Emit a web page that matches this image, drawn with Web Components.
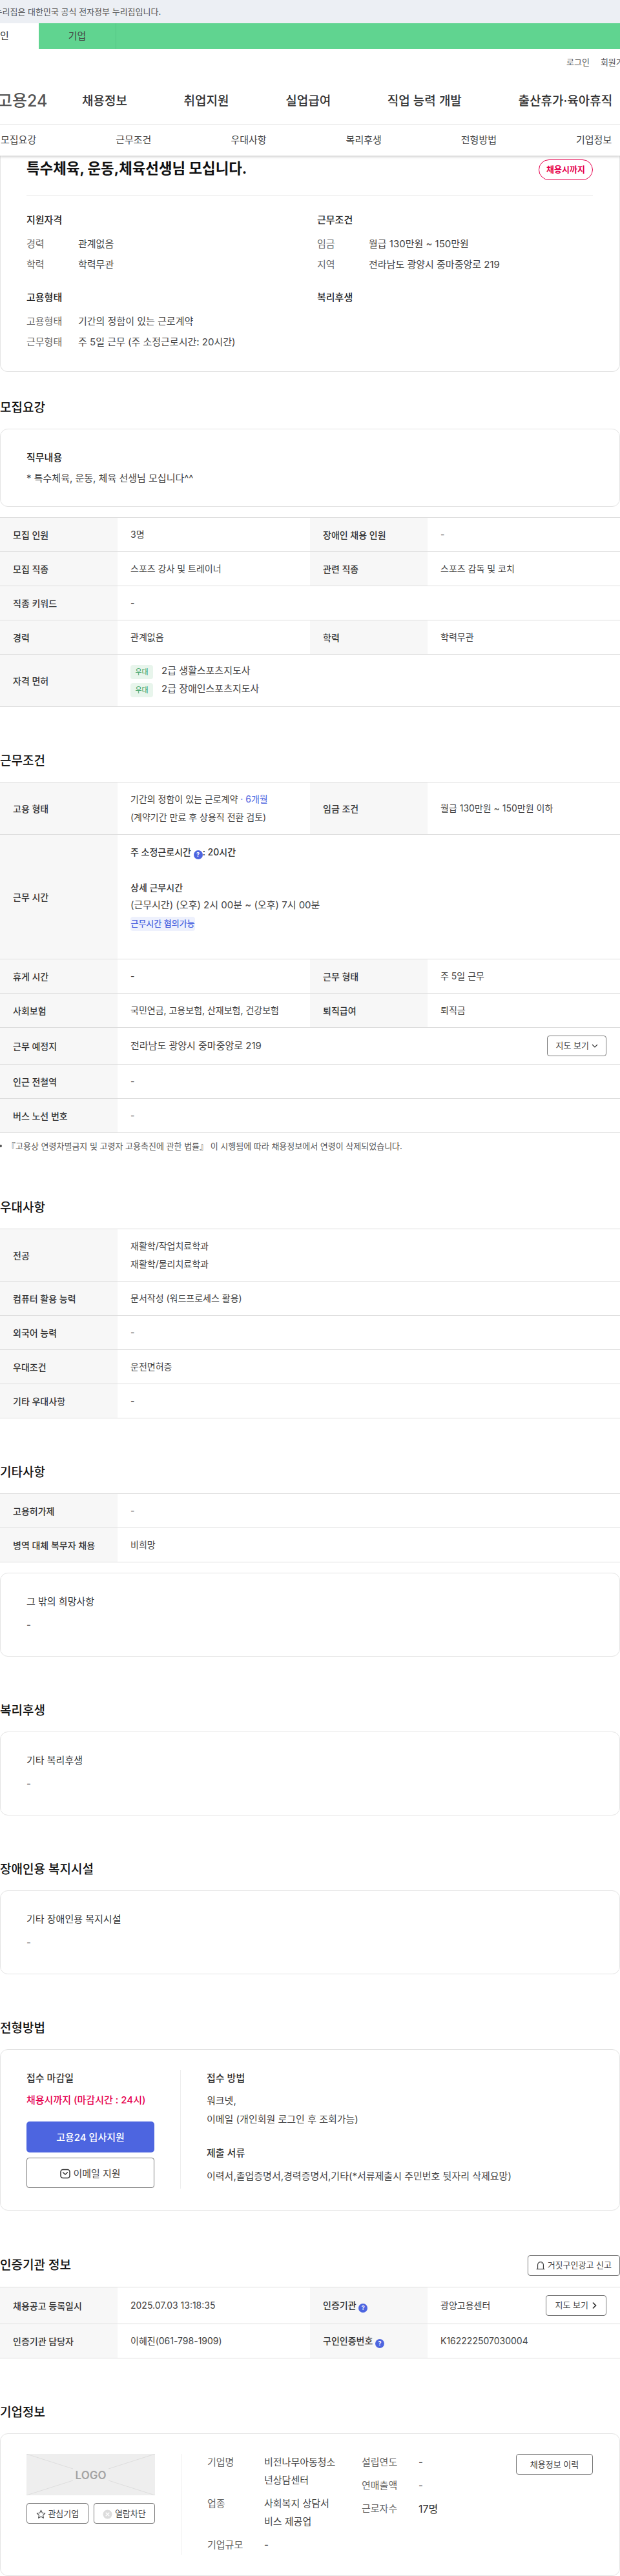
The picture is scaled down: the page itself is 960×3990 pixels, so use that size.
<!DOCTYPE html>
<html lang="ko">
<head>
<meta charset="utf-8">
<title>고용24 채용정보</title>
<style>
html,body{margin:0;padding:0;background:#fff;overflow-x:hidden}
body{width:960px;font-family:Inter,"Noto Sans CJK KR",sans-serif;font-size:14px;color:#444}
</style>
</head>
<body>
<site-header></site-header>

<job-summary>
  <span slot="title">특수체육, 운동,체육선생님 모십니다.</span>
  <span slot="status">채용시까지</span>
  <fact-group heading="지원자격">
    <fact-row label="경력">관계없음</fact-row>
    <fact-row label="학력">학력무관</fact-row>
  </fact-group>
  <fact-group heading="근무조건">
    <fact-row label="임금">월급 130만원 ~ 150만원</fact-row>
    <fact-row label="지역">전라남도 광양시 중마중앙로 219</fact-row>
  </fact-group>
  <fact-group heading="고용형태">
    <fact-row label="고용형태">기간의 정함이 있는 근로계약</fact-row>
    <fact-row label="근무형태">주 5일 근무 (주 소정근로시간: 20시간)</fact-row>
  </fact-group>
  <fact-group heading="복리후생"></fact-group>
</job-summary>

<page-section first heading="모집요강">
  <text-card heading="직무내용" strong compact>* 특수체육, 운동, 체육 선생님 모십니다^^</text-card>
  <info-table gap>
    <info-row><info-cell label="모집 인원">3명</info-cell><info-cell label="장애인 채용 인원">-</info-cell></info-row>
    <info-row><info-cell label="모집 직종">스포츠 강사 및 트레이너</info-cell><info-cell label="관련 직종">스포츠 감독 및 코치</info-cell></info-row>
    <info-row><info-cell label="직종 키워드">-</info-cell></info-row>
    <info-row><info-cell label="경력">관계없음</info-cell><info-cell label="학력">학력무관</info-cell></info-row>
    <info-row h="81"><info-cell label="자격 면허">
      <license-line>2급 생활스포츠지도사</license-line>
      <license-line>2급 장애인스포츠지도사</license-line>
    </info-cell></info-row>
  </info-table>
</page-section>

<page-section heading="근무조건">
  <info-table>
    <info-row h="81"><info-cell label="고용 형태"><text-line>기간의 정함이 있는 근로계약 <blue-text>· 6개월</blue-text></text-line><text-line>(계약기간 만료 후 상용직 전환 검토)</text-line></info-cell><info-cell label="임금 조건">월급 130만원 ~ 150만원 이하</info-cell></info-row>
    <info-row h="193"><info-cell label="근무 시간" top>
      <text-line strong>주 소정근로시간 <help-dot></help-dot>: 20시간</text-line>
      <text-line>&nbsp;</text-line>
      <text-line strong>상세 근무시간</text-line>
      <text-line big>(근무시간) (오후) 2시 00분 ~ (오후) 7시 00분</text-line>
      <soft-tag>근무시간 협의가능</soft-tag>
    </info-cell></info-row>
    <info-row><info-cell label="휴게 시간">-</info-cell><info-cell label="근무 형태">주 5일 근무</info-cell></info-row>
    <info-row><info-cell label="사회보험">국민연금, 고용보험, 산재보험, 건강보험</info-cell><info-cell label="퇴직급여">퇴직금</info-cell></info-row>
    <info-row h="57"><info-cell label="근무 예정지"><split-line><big-text>전라남도 광양시 중마중앙로 219</big-text><outline-btn w="92" h="32">지도 보기 <ui-icon name="down"></ui-icon></outline-btn></split-line></info-cell></info-row>
    <info-row><info-cell label="인근 전철역">-</info-cell></info-row>
    <info-row><info-cell label="버스 노선 번호">-</info-cell></info-row>
  </info-table>
  <foot-note>『고용상 연령차별금지 및 고령자 고용촉진에 관한 법률』 이 시행됨에 따라 채용정보에서 연령이 삭제되었습니다.</foot-note>
</page-section>

<page-section heading="우대사항" tight>
  <info-table>
    <info-row h="81"><info-cell label="전공"><text-line>재활학/작업치료학과</text-line><text-line>재활학/물리치료학과</text-line></info-cell></info-row>
    <info-row><info-cell label="컴퓨터 활용 능력">문서작성 (워드프로세스 활용)</info-cell></info-row>
    <info-row><info-cell label="외국어 능력">-</info-cell></info-row>
    <info-row><info-cell label="우대조건">운전면허증</info-cell></info-row>
    <info-row><info-cell label="기타 우대사항">-</info-cell></info-row>
  </info-table>
</page-section>

<page-section heading="기타사항">
  <info-table>
    <info-row><info-cell label="고용허가제">-</info-cell></info-row>
    <info-row><info-cell label="병역 대체 복무자 채용">비희망</info-cell></info-row>
  </info-table>
  <text-card heading="그 밖의 희망사항" gap>-</text-card>
</page-section>

<page-section heading="복리후생">
  <text-card heading="기타 복리후생">-</text-card>
</page-section>

<page-section heading="장애인용 복지시설">
  <text-card heading="기타 장애인용 복지시설">-</text-card>
</page-section>

<page-section heading="전형방법">
  <apply-card>
    <span slot="dl-title">접수 마감일</span>
    <span slot="deadline">채용시까지 (마감시간 : 24시)</span>
    <span slot="primary">고용24 입사지원</span>
    <span slot="secondary"><ui-icon name="mail"></ui-icon>이메일 지원</span>
    <span slot="m-title">접수 방법</span>
    <span slot="method">워크넷,<br>이메일 (개인회원 로그인 후 조회가능)</span>
    <span slot="d-title">제출 서류</span>
    <span slot="docs">이력서,졸업증명서,경력증명서,기타(*서류제출시 주민번호 뒷자리 삭제요망)</span>
  </apply-card>
</page-section>

<page-section heading="인증기관 정보">
  <outline-btn slot="action" w="143" h="32"><ui-icon name="siren"></ui-icon> 거짓구인광고 신고</outline-btn>
  <info-table>
    <info-row h="57"><info-cell label="채용공고 등록일시">2025.07.03 13:18:35</info-cell><info-cell>
      <span slot="label">인증기관 <help-dot></help-dot></span>
      <split-line><span>광양고용센터</span><outline-btn w="94" h="32">지도 보기 <ui-icon name="right"></ui-icon></outline-btn></split-line>
    </info-cell></info-row>
    <info-row><info-cell label="인증기관 담당자">이혜진(061-798-1909)</info-cell><info-cell>
      <span slot="label">구인인증번호 <help-dot></help-dot></span>K162222507030004
    </info-cell></info-row>
  </info-table>
</page-section>

<page-section heading="기업정보">
  <company-card>
    <span slot="star"><ui-icon name="star"></ui-icon> 관심기업</span>
    <span slot="block"><ui-icon name="xcircle"></ui-icon> 열람차단</span>
    <company-fact label="기업명" slot="col1">비전나무아동청소년상담센터</company-fact>
    <company-fact label="업종" slot="col1">사회복지 상담서비스 제공업</company-fact>
    <company-fact label="기업규모" slot="col1">-</company-fact>
    <company-fact label="설립연도" slot="col2">-</company-fact>
    <company-fact label="연매출액" slot="col2">-</company-fact>
    <company-fact label="근로자수" slot="col2" dark>17명</company-fact>
    <span slot="history">채용정보 이력</span>
  </company-card>
</page-section>

<script>
function def(tag, html, init){
  customElements.define(tag, class extends HTMLElement{
    constructor(){ super(); this.attachShadow({mode:'open'}).innerHTML = html; }
    connectedCallback(){ if(init) init.call(this, this.shadowRoot); }
  });
}
const ICONS = {
  down:'<svg width="10" height="10" viewBox="0 0 10 10" fill="none" stroke="#333" stroke-width="1.2"><path d="M1 3l4 4 4-4"/></svg>',
  right:'<svg width="10" height="12" viewBox="0 0 10 12" fill="none" stroke="#333" stroke-width="1.7"><path d="M3 1.5L7.5 6 3 10.5"/></svg>',
  siren:'<svg width="14" height="15" viewBox="0 0 14 15" fill="none" stroke="#333" stroke-width="1.1"><path d="M2.6 13.5V7a4.4 4.4 0 0 1 8.8 0v6.5"/><path d="M.6 13.6h12.8"/><path d="M8.6 4.8l.9 1" stroke-width=".9"/></svg>',
  mail:'<svg width="16" height="16" viewBox="0 0 16 16" fill="none" stroke="#333" stroke-width="1.5"><rect x="1" y="1.5" width="14" height="13" rx="3.5"/><path d="M4.6 6l3.4 3 3.4-3" stroke-linecap="round"/></svg>',
  star:'<svg width="15" height="15" viewBox="0 0 15 15" fill="none" stroke="#444" stroke-width="1.1" stroke-linejoin="round"><path d="M7.5 1.2l1.9 4 4.4.6-3.2 3 .8 4.4-3.9-2.1-3.9 2.1.8-4.4-3.2-3 4.4-.6z"/></svg>',
  xcircle:'<svg width="15" height="15" viewBox="0 0 15 15"><circle cx="7.5" cy="7.5" r="7" fill="#dcdcdc"/><path d="M4.7 4.7l5.6 5.6M10.3 4.7l-5.6 5.6" stroke="#fff" stroke-width="1.3"/></svg>'
};
def('ui-icon','<style>:host{display:inline-flex;vertical-align:middle}:host([name=mail]){margin-right:4px}</style><span id="i" style="display:inline-flex"></span>',function(r){ r.getElementById('i').innerHTML = ICONS[this.getAttribute('name')]||''; });

def('site-header',`<style>
:host{display:block;position:relative;z-index:5;background:#fff;box-shadow:0 2px 4px rgba(0,0,0,.2);height:241px;overflow:hidden}
.banner{height:36px;background:#eceff4;font-size:13px;line-height:36px;color:#555;margin-left:-24px;white-space:nowrap}
.banner-wrap{background:#eceff4;height:36px;overflow:hidden}
.green{height:40px;background:#60d490;display:flex;color:#444;font-size:15px;line-height:40px}
.green span{flex:0 0 120px;text-align:center;box-sizing:border-box}
.green .on{background:#fff;margin-left:-60px;color:#333}
.green .ent{border-right:1px solid #55c585}
.util{height:40px;display:flex;gap:17px;padding-left:877px;font-size:13px;line-height:40px;color:#555;white-space:nowrap;width:200px}
.nav{height:76px;display:flex;align-items:center;gap:87.7px;border-bottom:1px solid #e9e9e9;box-sizing:content-box;white-space:nowrap;color:#333;font-size:19px;font-weight:500}
.logo{font-size:25px;font-weight:500;color:#555;margin-left:-4px;margin-right:-36.7px;width:80px}
.sub{height:48px;display:flex;gap:123px;padding-left:1px;font-size:15px;line-height:48px;color:#444;white-space:nowrap}
</style>
<div class="banner-wrap"><div class="banner">이 누리집은 대한민국 공식 전자정부 누리집입니다.</div></div>
<div class="green"><span class="on">개인</span><span class="ent">기업</span></div>
<div class="util"><span>로그인</span><span>회원가입</span></div>
<div class="nav"><span class="logo">고용24</span><span>채용정보</span><span>취업지원</span><span>실업급여</span><span>직업 능력 개발</span><span>출산휴가·육아휴직</span></div>
<div class="sub"><span>모집요강</span><span>근무조건</span><span>우대사항</span><span>복리후생</span><span>전형방법</span><span>기업정보</span></div>`);

def('job-summary',`<style>
:host{display:block;border:1.5px solid #e3e3e3;border-top:0;border-radius:0 0 12px 12px;padding:0 40px;box-sizing:border-box;height:335px;width:960px}
.top{height:62px;border-bottom:1.5px solid #eee;box-sizing:border-box;display:flex;justify-content:space-between;align-items:flex-start;width:877px}
.t{font-size:22.4px;font-weight:700;color:#111;line-height:30px;margin-top:4.5px;white-space:nowrap}
.b{margin-top:6px;width:84px;height:32px;border:1px solid #e6004d;border-radius:16px;box-sizing:border-box;text-align:center;line-height:29px;color:#e6004d;font-size:13px;font-weight:700}
.g{display:grid;grid-template-columns:450px 1fr}
</style>
<div class="top"><div class="t"><slot name="title"></slot></div><div class="b"><slot name="status"></slot></div></div>
<div class="g"><slot></slot></div>`);

def('fact-group',`<style>
:host{display:block;padding-top:25px;height:120px;box-sizing:border-box}
h4{margin:0 0 10.5px;font-size:15px;line-height:26px;font-weight:500;color:#222}
.l{display:flex;flex-direction:column;gap:6.5px}
</style><h4></h4><div class="l"><slot></slot></div>`,function(r){ r.querySelector('h4').textContent=this.getAttribute('heading'); });

def('fact-row',`<style>
:host{display:flex;font-size:15px;line-height:26px;color:#444;white-space:nowrap}
.k{width:80px;color:#666}
</style><span class="k"></span><span><slot></slot></span>`,function(r){ r.querySelector('.k').textContent=this.getAttribute('label'); });

def('page-section',`<style>
:host{display:block;margin-top:69px;width:960px}
:host([first]){margin-top:40.5px}
:host([tight]){margin-top:72px}
.h{display:flex;justify-content:space-between;align-items:center;min-height:30px;margin-bottom:17px}
h2{margin:0;font-size:19px;line-height:30px;font-weight:500;color:#111}
</style><div class="h"><h2></h2><slot name="action"></slot></div><slot></slot>`,function(r){ r.querySelector('h2').textContent=this.getAttribute('heading'); });

def('text-card',`<style>
:host{display:block;border:1.5px solid #e3e3e3;border-radius:12px;padding:31.5px 40px 0;box-sizing:border-box;height:130px;background:#fff}
:host([compact]){height:121px}
:host([gap]){margin-top:16px}
h4{margin:0 0 10px;font-size:15px;line-height:26px;font-weight:400;color:#333}
:host([strong]) h4{font-weight:500;color:#222;margin-bottom:5.6px}
.b{font-size:15px;line-height:26px;color:#444}
</style><h4></h4><div class="b"><slot></slot></div>`,function(r){ r.querySelector('h4').textContent=this.getAttribute('heading'); });

def('info-table',`<style>
:host{display:block;border-top:1px solid #ddd;width:960px}
:host([gap]){margin-top:16px}
</style><slot></slot>`);

def('info-row',`<style>
:host{display:flex;border-bottom:1px solid #ddd;height:var(--h,52px);box-sizing:content-box}
</style><slot></slot>`,function(){ const h=this.getAttribute('h'); if(h) this.style.setProperty('--h',(h-1)+'px'); });

def('info-cell',`<style>
:host{flex:1 1 0;display:flex;min-width:0}
.th{flex:0 0 182px;box-sizing:border-box;background:#f7f7f7;padding-left:20px;display:flex;align-items:center;font-size:14px;font-weight:500;color:#333;white-space:nowrap}
.td{flex:1;min-width:0;box-sizing:border-box;padding:0 21px 0 20px;display:flex;flex-direction:column;justify-content:center;font-size:14px;line-height:27.5px;color:#444}
:host([top]) .td{justify-content:flex-start;padding-top:13px}
</style><div class="th"><slot name="label"><span id="l"></span></slot></div><div class="td"><slot></slot></div>`,function(r){ r.getElementById('l').textContent=this.getAttribute('label')||''; });

def('text-line',`<style>
:host{display:block;line-height:27.5px;white-space:nowrap}
:host([strong]){font-weight:500;color:#333}
:host([big]){font-size:15px}
</style><slot></slot>`);
def('blue-text','<style>:host{color:#4d65e0}</style><slot></slot>');
def('big-text','<style>:host{font-size:15px}</style><slot></slot>');

def('help-dot',`<style>:host{display:inline-block;width:14px;height:14px;border-radius:50%;background:#4d65e0;color:#fff;font:700 9px/14px Inter,sans-serif;text-align:center;vertical-align:-2px}</style>?`);

def('license-line',`<style>
:host{display:flex;align-items:center;gap:13px;height:28px;font-size:15px;color:#444;white-space:nowrap}
.c{width:35px;height:22px;border-radius:4px;background:#e8f5ec;color:#2f9e5c;font-size:11px;line-height:22px;text-align:center;margin-top:3px}
span.v{margin-top:-1px}
</style><span class="c">우대</span><span class="v"><slot></slot></span>`);

def('soft-tag',`<style>
:host{display:block;width:100px;height:22px;margin-top:4px;border-radius:4px;background:#eef1fd;color:#4d65e0;font-size:13px;line-height:21px;text-align:center;font-weight:500;white-space:nowrap}
</style><slot></slot>`);

def('split-line',`<style>:host{display:flex;justify-content:space-between;align-items:center}</style><slot></slot>`);

def('outline-btn',`<style>
:host{display:inline-flex;align-items:center;justify-content:center;box-sizing:border-box;border:1px solid #777;border-radius:4px;background:#fff;font-size:13px;line-height:1;color:#444;white-space:pre;width:var(--w,auto);height:var(--h,32px);flex:none}
</style><slot></slot>`,function(){ const w=this.getAttribute('w'),h=this.getAttribute('h'); if(w)this.style.setProperty('--w',w+'px'); if(h)this.style.setProperty('--h',h+'px'); });

def('foot-note',`<style>
:host{display:flex;font-size:13px;line-height:18px;color:#555;padding-top:11px;white-space:nowrap;align-items:center}
i{width:4px;height:4px;border-radius:50%;background:#555;margin-right:8px;margin-left:-1px}
</style><i></i><slot></slot>`);

def('apply-card',`<style>
:host{display:flex;border:1.5px solid #e3e3e3;border-radius:12px;padding:31px 40px 0;box-sizing:border-box;height:250px;background:#fff}
.l{flex:0 0 239px;width:239px;box-sizing:border-box;padding-right:40px;border-right:1px solid #eee;height:184px}
.r{padding-left:40px;font-size:15px;color:#444}
.ttl{font-size:15px;font-weight:500;color:#333;line-height:26px;height:26px}
.dl{font-size:15px;font-weight:500;color:#e6004d;line-height:26px;margin-top:8px}
.p{height:48px;margin-top:20px;background:#4d65e0;border-radius:5px;color:#fff;font-weight:500;font-size:15px;display:flex;align-items:center;justify-content:center}
.s{height:47px;margin-top:8px;border:1px solid #777;border-radius:4px;box-sizing:border-box;font-size:15px;color:#444;display:flex;align-items:center;justify-content:center;white-space:pre}
.m{line-height:29px;margin-top:7px;height:58px}
.ttl.d{margin-top:25px}
.doc{line-height:26px;margin-top:10px;white-space:nowrap}
</style>
<div class="l"><div class="ttl"><slot name="dl-title"></slot></div><div class="dl"><slot name="deadline"></slot></div><div class="p"><slot name="primary"></slot></div><div class="s"><slot name="secondary"></slot></div></div>
<div class="r"><div class="ttl"><slot name="m-title"></slot></div><div class="m"><slot name="method"></slot></div><div class="ttl d"><slot name="d-title"></slot></div><div class="doc"><slot name="docs"></slot></div></div>`);

def('company-card',`<style>
:host{display:flex;border:1.5px solid #e3e3e3;border-radius:12px;padding:31px 40px 0;box-sizing:border-box;height:221px;background:#fff}
.l{flex:0 0 239px;box-sizing:border-box;padding-right:40px;border-right:1px solid #eee;height:156px}
.logo{display:block;width:199px;height:64px}
.bs{display:flex;justify-content:space-between;margin-top:12px}
.b{height:32px;box-sizing:border-box;border:1px solid #777;border-radius:4px;font-size:13px;color:#444;display:flex;align-items:center;justify-content:center;white-space:pre}
.b1{width:96px}.b2{width:95px}
.c1{margin-left:40px;margin-top:-1px;width:239px;flex:none}
.c2{width:239px;margin-top:-1px;flex:none}
.h{width:119px;height:32px;flex:none;box-sizing:border-box;border:1px solid #777;border-radius:4px;font-size:13px;color:#444;display:flex;align-items:center;justify-content:center}
</style>
<div class="l">
<svg class="logo" viewBox="0 0 199 64"><rect width="199" height="64" fill="#eee"/><path d="M0 0L72 23M199 0L127 23M0 64L72 41M199 64L127 41" stroke="#ddd" stroke-width="1"/><text x="99.5" y="39" text-anchor="middle" font-family="Inter,sans-serif" font-size="17" font-weight="600" fill="#a3a3a3">LOGO</text></svg>
<div class="bs"><div class="b b1"><slot name="star"></slot></div><div class="b b2"><slot name="block"></slot></div></div>
</div>
<div class="c1"><slot name="col1"></slot></div>
<div class="c2"><slot name="col2"></slot></div>
<div class="h"><slot name="history"></slot></div>`);

def('company-fact',`<style>
:host{display:flex;font-size:15px;line-height:28px;margin-bottom:8px;color:#444}
.k{flex:0 0 88px;color:#666;white-space:nowrap}
.v{width:111px;word-break:break-all}
:host([dark]) .v{color:#333;font-size:16px}
</style><span class="k"></span><span class="v"><slot></slot></span>`,function(r){ r.querySelector('.k').textContent=this.getAttribute('label'); });
</script>
</body>
</html>
